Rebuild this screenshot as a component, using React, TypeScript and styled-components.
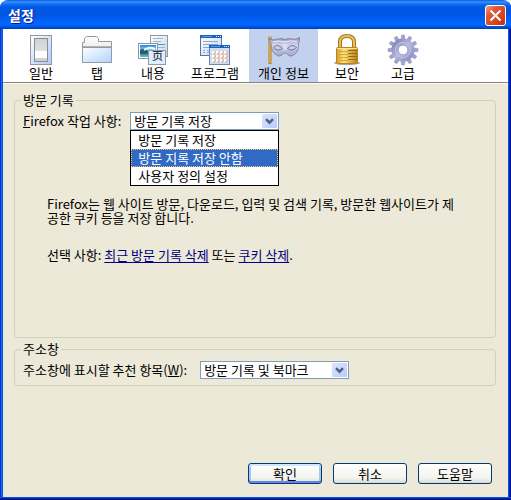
import React from 'react';
import styled, { createGlobalStyle, css } from 'styled-components';

const GlobalStyle = createGlobalStyle`
  * { box-sizing: border-box; }
  html, body { margin: 0; background: #fff; }
  body, button, select {
    font-family: "Noto Sans CJK KR", "Noto Sans", sans-serif;
    font-size: 13px;
    line-height: 14px;
    color: #000;
  }
`;

const Window = styled.div`
  min-height: 100vh;
  display: flex;
  flex-direction: column;
  padding: 0 3px 3px;
  border-radius: 8px 8px 0 0;
  background:
    linear-gradient(#0855dd 0 1px, #0024b8 1px 2px, #00138c 2px) bottom / 100% 3px no-repeat,
    linear-gradient(90deg, #0831d9 0 1px, #166aee 1px 2px, #0855dd 2px 3px) left / 3px 100% no-repeat,
    linear-gradient(90deg, #0855dd 0 1px, #001dc0 1px 2px, #00138c 2px 3px) right / 3px 100% no-repeat,
    #ece9d8;
  overflow: hidden;
`;

const TitleBar = styled.header`
  height: 29px;
  margin: 0 -3px;
  padding: 0 5px 0 8px;
  display: flex;
  align-items: center;
  justify-content: space-between;
  background: linear-gradient(
    #0a5be0 0, #3a92ff 2px, #1170f6 4px, #0058e6 7px,
    #0054e0 14px, #0062fa 21px, #0166ff 25px, #0050d8 27px, #003cb8 29px
  );
`;

const Title = styled.h1`
  margin: 0;
  font-size: 14px;
  line-height: 20px;
  font-weight: 700;
  color: #fff;
  text-shadow: 1px 1px 0 #0a1883;
`;

const CloseButton = styled.button`
  width: 21px;
  height: 21px;
  padding: 0;
  margin-top: 2px;
  display: grid;
  place-items: center;
  border: 1px solid #fff;
  border-radius: 3px;
  background: linear-gradient(135deg, #f0a088 0, #e2583a 30%, #d8431c 70%, #b83210 100%);
`;

const Toolbar = styled.nav`
  height: 54px;
  padding-left: 10px;
  display: flex;
  background: #fff;
  border-bottom: 1px solid #85837a;
  box-shadow: 0 1px 0 #fbfaf5;
`;

const ToolButton = styled.button<{ $width: number; $active?: boolean }>`
  flex: 0 0 ${p => p.$width}px;
  padding: 5px 0 0;
  display: flex;
  flex-direction: column;
  align-items: center;
  border: 0;
  white-space: nowrap;
  background: ${p => (p.$active ? '#c2d2ee' : 'transparent')};

  svg { display: block; flex: none; }
`;

const Content = styled.main`
  flex: 1;
  display: flex;
  flex-direction: column;
  gap: 4px;
  padding: 10px 12px 13px 11px;
`;

const Group = styled.fieldset<{ $minHeight?: number }>`
  min-width: 0;
  min-height: ${p => p.$minHeight ?? 0}px;
  margin: 0;
  padding: 5px 32px 6px 8px;
  border: 1px solid #d0d0bf;
  border-radius: 4px;
`;

const Legend = styled.legend`
  margin-left: -2px;
  padding: 0 2px;
`;

const Field = styled.div<{ $gap: number }>`
  display: flex;
  align-items: center;
  gap: ${p => p.$gap}px;
  white-space: nowrap;
`;

const SelectBox = styled.div`
  position: relative;
  width: 149px;
`;

const Select = styled.select`
  display: block;
  appearance: none;
  width: 100%;
  height: 18px;
  margin: 0;
  padding: 0 20px 0 3px;
  line-height: 16px;
  border: 1px solid #7f9db9;
  border-radius: 0;
  background: #fff;
`;

const Arrow = styled.span`
  position: absolute;
  top: 2px;
  right: 2px;
  width: 15px;
  height: 14px;
  display: grid;
  place-items: center;
  border-radius: 1px;
  background: linear-gradient(135deg, #dbe5fe, #b7cbfa);
  pointer-events: none;
`;

const Menu = styled.ul`
  position: absolute;
  top: 100%;
  left: 0;
  width: 100%;
  margin: 0;
  padding: 0;
  list-style: none;
  border: 1px solid #000;
  background: #fff;
`;

const MenuItem = styled.li<{ $selected?: boolean }>`
  height: 18px;
  padding: 0 6px;
  line-height: 16px;
  border: 1px solid transparent;
  ${p => p.$selected && css`
    color: #fff;
    background: #316ac5;
    border: 1px dotted #f2c86c;
  `}
`;

const Description = styled.p`
  margin: 67px 0 23px 24px;
`;

const Options = styled.p`
  margin: 0 0 0 24px;
`;

const Link = styled.a`
  color: #000080;
  text-decoration: underline;
  text-underline-offset: 2px;
`;

const Footer = styled.footer`
  margin-top: auto;
  padding-right: 4px;
  display: flex;
  justify-content: flex-end;
  gap: 11px;
`;

const PushButton = styled.button<{ $primary?: boolean }>`
  width: 74px;
  height: 21px;
  padding: 0;
  line-height: 18px;
  border: 1px solid #003c74;
  border-radius: 3px;
  background: linear-gradient(#fff, #f3f3ee 75%, #dcd8cc);
  ${p => p.$primary && css`
    box-shadow: inset 0 2px 0 #cee7ff, inset 0 -2px 0 #6982ee,
      inset 2px 0 0 #aac4f4, inset -2px 0 0 #aac4f4;
  `}
`;

const ArrowIcon = () => (
  <svg width="9" height="7" viewBox="0 0 9 7" aria-hidden="true">
    <path d="M1 1.2 4.5 4.7 8 1.2" fill="none" stroke="#4d6185" strokeWidth="2.4" />
  </svg>
);

const GeneralIcon = () => (
  <svg width="32" height="32" viewBox="0 0 32 32" aria-hidden="true">
    <defs>
      <linearGradient id="gen" x1="0" y1="0" x2="1" y2="1">
        <stop offset="0" stopColor="#fff" /><stop offset="1" stopColor="#a9caff" />
      </linearGradient>
      <linearGradient id="genSwitch" x1="0" y1="0" x2="0" y2="1">
        <stop offset="0" stopColor="#d0d0d0" /><stop offset="1" stopColor="#eee" />
      </linearGradient>
    </defs>
    <rect x="5.5" y="1.5" width="21" height="29" fill="url(#gen)" stroke="#96989b" />
    <rect x="9.5" y="4.5" width="13" height="23" fill="url(#genSwitch)" stroke="#8d8d8d" />
    <rect x="10" y="17" width="12" height="7" fill="#fff" />
    <rect x="10" y="24" width="12" height="3" fill="#d0d0d0" />
  </svg>
);

const TabIcon = () => (
  <svg width="32" height="32" viewBox="0 0 32 32" aria-hidden="true">
    <defs>
      <linearGradient id="tabBody" x1="0" y1="0" x2="1" y2="1">
        <stop offset="0" stopColor="#fff" /><stop offset="1" stopColor="#b0d2ff" />
      </linearGradient>
      <linearGradient id="tabTop" x1="0" y1="0" x2="0" y2="1">
        <stop offset="0" stopColor="#fff" /><stop offset="1" stopColor="#d4d4d4" />
      </linearGradient>
    </defs>
    <path d="M1.500 28V8.500H3.500V4.500L5.500 2.500H15.500L17.500 4.500V7.500H30.500V28Z" fill="url(#tabTop)" stroke="#989898" />
    <rect x="1.500" y="13.500" width="29" height="15" fill="url(#tabBody)" stroke="#929ba6" />
    <path d="M2 12.500H30" stroke="#b5b5b5" />
  </svg>
);

const ContentIcon = () => (
  <svg width="32" height="32" viewBox="0 0 32 32" aria-hidden="true">
    <defs>
      <linearGradient id="conPage" x1="0" y1="0" x2="1" y2="1">
        <stop offset="0" stopColor="#fff" /><stop offset="1" stopColor="#c0d5f0" />
      </linearGradient>
      <linearGradient id="conPhoto" x1="0" y1="0" x2="0" y2="1">
        <stop offset="0" stopColor="#2980df" /><stop offset=".5" stopColor="#a6e4f8" />
        <stop offset=".6" stopColor="#176686" /><stop offset="1" stopColor="#68c5d5" />
      </linearGradient>
    </defs>
    <rect x="13.500" y="1.500" width="17" height="21" fill="url(#conPage)" stroke="#8e989f" />
    <path d="M16 4.500H26M16 7.500H24M16 13.500H28M22 16.500H28" stroke="#a7b4bf" />
    <path d="M16 10.500H28" stroke="#4c9eac" />
    <rect x="1.500" y="9.500" width="19" height="15" fill="#fff" stroke="#8b969d" />
    <rect x="3" y="11" width="16" height="12" fill="url(#conPhoto)" />
    <path d="M3 16Q7 13 11 17L19 18V19L3 20Z" fill="#245c70" />
    <path d="M7 16Q12 12 18 15" fill="none" stroke="#eaffff" strokeWidth="2" />
    <rect x="11.500" y="16.500" width="17" height="14" fill="#e0edff" stroke="#8f9aa7" />
    <text x="15" y="26" fontSize="11" fontWeight="500" fontFamily="Noto Sans CJK SC, sans-serif" fill="#303b48">页</text>
  </svg>
);

const CalendarCells = () => (
  <>
    {[17, 21, 25].map(y => [13, 17, 21, 25].map(x => (
      <g key={`${x}-${y}`}>
        <rect x={x} y={y} width="3" height="3" fill="#fff" />
        <path d={`M${x + 3} ${y}v3h-2`} fill="none" stroke="#ef9d78" strokeWidth="1" />
      </g>
    )))}
  </>
);

const ProgramIcon = () => (
  <svg width="32" height="32" viewBox="0 0 32 32" aria-hidden="true">
    <defs>
      <linearGradient id="progPage" x1="0" y1="0" x2="1" y2="1">
        <stop offset="0" stopColor="#fff" /><stop offset="1" stopColor="#b9d8ff" />
      </linearGradient>
    </defs>
    <rect x="1.500" y="1.500" width="21" height="20" fill="url(#progPage)" stroke="#5674a6" />
    <path d="M1 1H23V4H1Z" fill="#1961ba" />
    <path d="M3 2.500H13" stroke="#4da2ed" />
    <path d="M17 2.500h1M19 2.500h1M21 2.500h1" stroke="#e4ecff" />
    <path d="M4 7.500H19M4 10.500H19M4 13.500H10M4 16.500h2M8 16.500h2M4 18.500h2M8 18.500h2" stroke="#99a2c4" />
    <rect x="10.500" y="11.500" width="20" height="19" fill="#ccddf6" stroke="#6b88b6" />
    <path d="M10 11H31V14H10Z" fill="#1961ba" />
    <path d="M12 12.500H21" stroke="#4da2ed" />
    <path d="M25 12.500h1M27 12.500h1M29 12.500h1" stroke="#e4ecff" />
    <CalendarCells />
  </svg>
);

const MaskIcon = () => (
  <svg width="32" height="32" viewBox="0 0 32 32" aria-hidden="true">
    <defs>
      <linearGradient id="mask" x1="0" y1="0" x2="0" y2="1">
        <stop offset="0" stopColor="#9092b8" /><stop offset=".4" stopColor="#d2d3ea" /><stop offset="1" stopColor="#a3a5cf" />
      </linearGradient>
    </defs>
    <path d="M2 2.500V30" stroke="#b77b24" strokeWidth="3" />
    <path d="M2 2V29" stroke="#f0cc51" />
    <path d="M.5 4.500Q5 7 10 5Q14 4 17 5.500Q20 4 24 5Q28 6 31.500 3.500Q32 7 30.500 9Q31 17 26.500 20.500Q22 24 18.500 19.500Q17 18 15.500 19.500Q12 24 7.500 20.500Q3 17 3 9Q.500 8 .5 4.500Z" fill="url(#mask)" stroke="#7c7b9c" strokeWidth=".8" />
    <path d="M5 8Q10 6 16 8Q22 6 29 7.500" fill="none" stroke="#eeeef8" />
    <path d="M5.500 13.500Q9.500 9 14.500 14.500Q10 18 5.500 13.500ZM19.500 14.500Q24 9 28.500 13.500Q24 18 19.500 14.500Z" fill="#c2d2ee" stroke="#77759a" />
    <path d="M16 10V16M18 10V16" stroke="#f0effa" fill="none" />
  </svg>
);

const LockIcon = () => (
  <svg width="32" height="32" viewBox="0 0 32 32" aria-hidden="true">
    <defs>
      <linearGradient id="lock" x1="0" y1="0" x2="1" y2="0">
        <stop offset="0" stopColor="#d69b27" /><stop offset=".35" stopColor="#ffe47b" /><stop offset="1" stopColor="#b98018" />
      </linearGradient>
    </defs>
    <ellipse cx="16" cy="29" rx="13" ry="2" fill="#9ca7ba" />
    <path d="M9 17V8Q9 2 16 2Q23 2 23 8V17" fill="none" stroke="#a67819" strokeWidth="4" />
    <path d="M9 17V8Q9 2 16 2Q23 2 23 8V17" fill="none" stroke="#e4c263" strokeWidth="2" />
    <rect x="5.500" y="13.500" width="21" height="16" rx="1" fill="url(#lock)" stroke="#b88420" />
    <path d="M6 17.500H17M6 20.500H17M6 23.500H17M6 26.500H17" stroke="#d6a637" />
    <path d="M17 16.500H26M17 19.500H26M17 22.500H26M17 25.500H26" stroke="#9b6c18" />
    <path d="M6 14.500H26" stroke="#ffe798" />
  </svg>
);

const GearIcon = () => (
  <svg width="32" height="32" viewBox="0 0 32 32" aria-hidden="true">
    <defs>
      <linearGradient id="gear" x1="0" y1="0" x2="1" y2="1">
        <stop offset="0" stopColor="#8788b9" /><stop offset=".5" stopColor="#b7b7df" /><stop offset="1" stopColor="#8d90c1" />
      </linearGradient>
    </defs>
    {Array.from({ length: 12 }, (_, i) => (
      <path key={i} d="M14 6 14.500 1H17.500L18 6Z" fill="#a1a2d0" stroke="#9092c2" strokeWidth=".5" transform={`rotate(${i * 30} 16 16)`} />
    ))}
    <circle cx="16" cy="16" r="8.500" fill="none" stroke="url(#gear)" strokeWidth="6" />
    <circle cx="16" cy="16" r="7.500" fill="none" stroke="#c4c5e7" />
    <circle cx="16" cy="16" r="5" fill="#fff" stroke="#8487b9" />
  </svg>
);

const tools = [
  { label: '일반', width: 56, Icon: GeneralIcon },
  { label: '탭', width: 56, Icon: TabIcon },
  { label: '내용', width: 56, Icon: ContentIcon },
  { label: '프로그램', width: 68, Icon: ProgramIcon },
  { label: '개인 정보', width: 69, Icon: MaskIcon, active: true },
  { label: '보안', width: 58, Icon: LockIcon },
  { label: '고급', width: 54, Icon: GearIcon },
];

const historyModes = ['방문 기록 저장', '방문 지록 저장 안함', '사용자 정의 설정'];

export default function App() {
  return (
    <>
      <GlobalStyle />
      <Window>
        <TitleBar>
          <Title>설정</Title>
          <CloseButton type="button" aria-label="닫기">
            <svg width="13" height="13" viewBox="0 0 13 13" aria-hidden="true">
              <path d="M1.500 1.500 11.500 11.500M11.500 1.500 1.500 11.500" stroke="#fff" strokeWidth="2" />
            </svg>
          </CloseButton>
        </TitleBar>
        <Toolbar>
          {tools.map(({ label, width, Icon, active }) => (
            <ToolButton key={label} type="button" $width={width} $active={active} aria-pressed={!!active}>
              <Icon />
              {label}
            </ToolButton>
          ))}
        </Toolbar>
        <Content>
          <Group $minHeight={245}>
            <Legend>방문 기록</Legend>
            <Field $gap={9}>
              <label htmlFor="history"><u>F</u>irefox 작업 사항:</label>
              <SelectBox>
                <Select id="history" defaultValue={historyModes[0]}>
                  {historyModes.map(mode => <option key={mode}>{mode}</option>)}
                </Select>
                <Arrow><ArrowIcon /></Arrow>
                <Menu role="listbox" aria-label="Firefox 작업 사항">
                  {historyModes.map((mode, i) => (
                    <MenuItem key={mode} role="option" aria-selected={i === 1} $selected={i === 1}>{mode}</MenuItem>
                  ))}
                </Menu>
              </SelectBox>
            </Field>
            <Description>
              Firefox는 웹 사이트 방문, 다운로드, 입력 및 검색 기록, 방문한 웹사이트가 제공한 쿠키 등을 저장 합니다.
            </Description>
            <Options>
              선택 사항: <Link href="#recent">최근 방문 기록 삭제</Link> 또는 <Link href="#cookies">쿠키 삭제</Link>.
            </Options>
          </Group>
          <Group>
            <Legend>주소창</Legend>
            <Field $gap={13}>
              <label htmlFor="address">주소창에 표시할 추천 항목(<u>W</u>):</label>
              <SelectBox>
                <Select id="address">
                  <option>방문 기록 및 북마크</option>
                </Select>
                <Arrow><ArrowIcon /></Arrow>
              </SelectBox>
            </Field>
          </Group>
          <Footer>
            <PushButton type="button" $primary>확인</PushButton>
            <PushButton type="button">취소</PushButton>
            <PushButton type="button">도움말</PushButton>
          </Footer>
        </Content>
      </Window>
    </>
  );
}
